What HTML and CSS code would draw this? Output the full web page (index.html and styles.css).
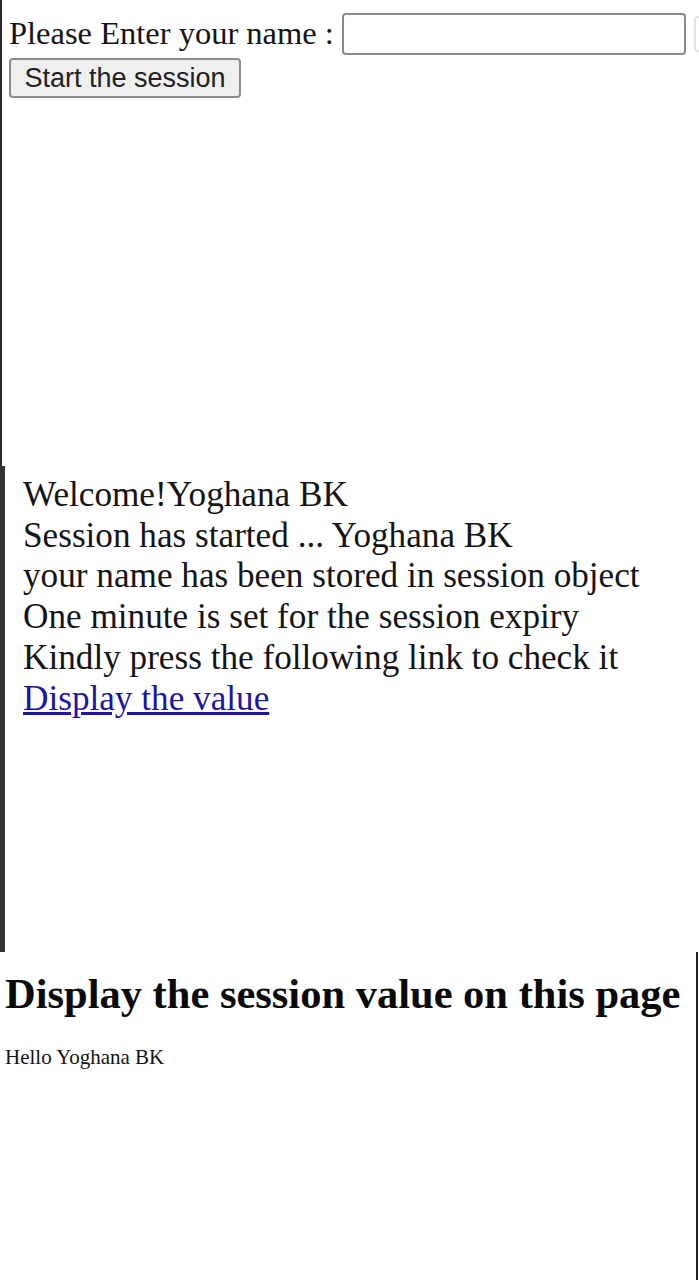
FILE: index.html
```html
<!DOCTYPE html>
<html>
<head>
<meta charset="utf-8">
<link rel="stylesheet" href="styles.css">
</head>
<body>
<section class="shot shot-form">
  <form class="form">
    <div class="row">
      <label class="label" for="name">Please Enter your name :</label>
      <input class="field" id="name" type="text">
      <span class="edge"></span>
    </div>
    <button class="btn" type="button">Start the session</button>
  </form>
</section>
<section class="shot shot-welcome">
  <p class="msg">Welcome!Yoghana BK<br>Session has started ... Yoghana BK<br>your name has been stored in session object<br>One minute is set for the session expiry<br>Kindly press the following link to check it<br><a class="link" href="#">Display the value</a></p>
</section>
<section class="shot shot-display">
  <h1 class="title">Display the session value on this page</h1>
  <p class="hello">Hello Yoghana BK</p>
</section>
</body>
</html>
```
FILE: styles.css
```css
html, body {
  margin: 0;
  padding: 0;
  background: #fff;
}
body {
  width: 699px;
  font-family: "Liberation Serif", "Times New Roman", serif;
  color: #141414;
}
.shot {
  box-sizing: border-box;
  overflow: hidden;
}
.shot-form {
  height: 466px;
  border-left: 2px solid #2a2a2a;
  padding: 13px 0 0 7px;
}
.form {
  display: flex;
  flex-direction: column;
  align-items: flex-start;
  gap: 3px;
}
.row {
  display: flex;
  align-items: center;
  gap: 8px;
  width: 720px;
}
.label {
  font-size: 32.5px;
  line-height: 38px;
  margin-top: -3px;
  white-space: nowrap;
}
.field {
  box-sizing: border-box;
  width: 344px;
  height: 42px;
  margin: 0;
  border: 2px solid #8a8a8a;
  border-radius: 4px;
  background: #fff;
  flex: none;
}
.edge {
  flex: none;
  width: 20px;
  height: 36px;
  border: 2px solid #e3e3e3;
  border-radius: 4px;
  box-sizing: border-box;
}
.btn {
  box-sizing: border-box;
  width: 232px;
  height: 40px;
  margin: 0;
  font-family: "Liberation Sans", Arial, sans-serif;
  font-size: 27px;
  color: #222;
  background: #efefef;
  border: 2px solid #8c8c8c;
  border-radius: 4px;
  padding: 0;
}
.shot-welcome {
  height: 486px;
  border-left: 5px solid #333;
  padding: 9px 0 0 18px;
}
.msg {
  margin: 0;
  font-size: 35.2px;
  line-height: 40.7px;
}
.link {
  color: #1c15a6;
}
.shot-display {
  height: 328px;
  width: 698px;
  border-right: 2px solid #222;
  padding: 12px 0 0 5px;
}
.title {
  margin: 0;
  font-size: 42.5px;
  font-weight: bold;
  line-height: 60px;
  color: #0a0a0a;
  white-space: nowrap;
}
.hello {
  margin: 22px 0 0;
  font-size: 21px;
  line-height: 22px;
}
```
